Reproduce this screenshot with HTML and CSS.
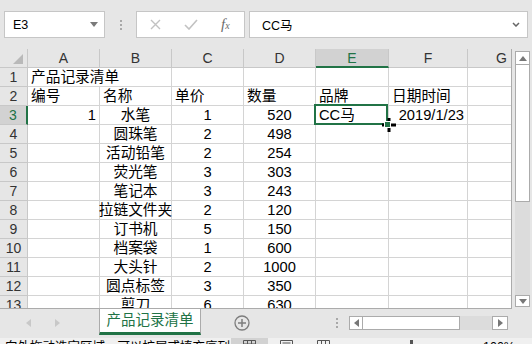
FILE: index.html
```html
<!DOCTYPE html>
<html lang="zh-CN">
  <head>
    <meta charset="UTF-8" />
    <title>产品记录清单 - Excel</title>
    <link rel="stylesheet" href="styles.css">
  </head>
  <body>
    <div class="topbar">
      <div class="namebox">
        <span>E3</span>
        <svg class="caret" width="8" height="5" viewBox="0 0 8 5"><path d="M0 0h8L4 5z" fill="#7a7a7a"/></svg>
      </div>
      <div class="grip"><i></i><i></i><i></i></div>
      <div class="fxbuttons">
        <svg width="11" height="11" viewBox="0 0 11 11"><path d="M1 1l9 9M10 1l-9 9" stroke="#c2c2c2" stroke-width="1.4"/></svg>
        <svg class="ok" width="14" height="11" viewBox="0 0 14 11"><path d="M1 6l4 4 8-9" stroke="#c2c2c2" stroke-width="1.6" fill="none"/></svg>
        <span class="fx">f<sub>x</sub></span>
      </div>
      <div class="formula">
        <span>CC马</span>
        <svg class="chev" width="8" height="5" viewBox="0 0 8 5"><path d="M1 1l3 3 3-3" stroke="#666" stroke-width="1.5" fill="none"/></svg>
      </div>
    </div>

    <div class="workarea">
      <div class="sheet-wrap">
        <div class="sheet">
          <div class="hd corner"><svg width="10" height="10" viewBox="0 0 10 10"><path d="M10 0v10H0z" fill="#b9b9b9"/></svg></div>
          <div class="hd">A</div><div class="hd">B</div><div class="hd">C</div><div class="hd">D</div>
          <div class="hd sel">E</div><div class="hd">F</div><div class="hd last">G</div>

          <div class="rh">1</div><div class="span2">产品记录清单</div><div></div><div></div><div></div><div></div><div></div>
          <div class="rh">2</div><div>编号</div><div>名称</div><div>单价</div><div>数量</div><div>品牌</div><div>日期时间</div><div></div>
          <div class="rh sel">3</div><div class="num">1</div><div class="mid">水笔</div><div class="mid">1</div><div class="mid">520</div><div class="active">CC马</div><div class="num">2019/1/23</div><div></div>
          <div class="rh">4</div><div></div><div class="mid">圆珠笔</div><div class="mid">2</div><div class="mid">498</div><div></div><div></div><div></div>
          <div class="rh">5</div><div></div><div class="mid">活动铅笔</div><div class="mid">2</div><div class="mid">254</div><div></div><div></div><div></div>
          <div class="rh">6</div><div></div><div class="mid">荧光笔</div><div class="mid">3</div><div class="mid">303</div><div></div><div></div><div></div>
          <div class="rh">7</div><div></div><div class="mid">笔记本</div><div class="mid">3</div><div class="mid">243</div><div></div><div></div><div></div>
          <div class="rh">8</div><div></div><div class="mid">拉链文件夹</div><div class="mid">2</div><div class="mid">120</div><div></div><div></div><div></div>
          <div class="rh">9</div><div></div><div class="mid">订书机</div><div class="mid">5</div><div class="mid">150</div><div></div><div></div><div></div>
          <div class="rh">10</div><div></div><div class="mid">档案袋</div><div class="mid">1</div><div class="mid">600</div><div></div><div></div><div></div>
          <div class="rh">11</div><div></div><div class="mid">大头针</div><div class="mid">2</div><div class="mid">1000</div><div></div><div></div><div></div>
          <div class="rh">12</div><div></div><div class="mid">圆点标签</div><div class="mid">3</div><div class="mid">350</div><div></div><div></div><div></div>
          <div class="rh">13</div><div></div><div class="mid">剪刀</div><div class="mid">6</div><div class="mid">630</div><div></div><div></div><div></div>
        </div>
      </div>
      <div class="vscroll">
        <div class="sbtn"><svg width="8" height="5" viewBox="0 0 8 5"><path d="M0 5h8L4 0z" fill="#777"/></svg></div>
        <div class="vthumb"></div>
        <div class="track"></div>
        <div class="sbtn down"><svg width="8" height="5" viewBox="0 0 8 5"><path d="M0 0h8L4 5z" fill="#777"/></svg></div>
      </div>
    </div>

    <div class="tabbar">
      <div class="tabnav">
        <svg width="5" height="8" viewBox="0 0 5 8"><path d="M5 0v8L0 4z" fill="#c8c8c8"/></svg>
        <svg width="5" height="8" viewBox="0 0 5 8"><path d="M0 0v8l5-4z" fill="#c8c8c8"/></svg>
      </div>
      <div class="tab">产品记录清单</div>
      <svg class="addsheet" width="16" height="16" viewBox="0 0 16 16"><circle cx="8" cy="8" r="7" fill="none" stroke="#7d7d7d" stroke-width="1.3"/><path d="M8 4v8M4 8h8" stroke="#7d7d7d" stroke-width="1.5"/></svg>
      <div class="grip small"><i></i><i></i><i></i></div>
      <div class="hscroll">
        <div class="sbtn"><svg width="5" height="8" viewBox="0 0 5 8"><path d="M5 0v8L0 4z" fill="#777"/></svg></div>
        <div class="hthumb"></div>
        <div class="track"></div>
        <div class="sbtn"><svg width="5" height="8" viewBox="0 0 5 8"><path d="M0 0v8l5-4z" fill="#777"/></svg></div>
      </div>
    </div>

    <div class="statusbar">
      <div class="status-text">向外拖动选定区域，可以扩展或填充序列；向内拖动则进行清除</div>
      <div class="view on"><svg width="13" height="10" viewBox="0 0 13 10"><path d="M0.5 0.5h12v9h-12zM4.5 0.5v9M8.5 0.5v9M0.5 4h12" stroke="#555" fill="none"/></svg></div>
      <div class="view"><svg width="13" height="10" viewBox="0 0 13 10"><path d="M0.5 0.5h12v9h-12zM2.5 3h8M2.5 5.5h8" stroke="#555" fill="none"/></svg></div>
      <div class="view"><svg width="13" height="10" viewBox="0 0 13 10"><path d="M0.5 0.5h12v9h-12zM4.5 0.5v9M8.5 0.5v9" stroke="#555" fill="none"/></svg></div>
      <div class="zoom"><i></i></div>
      <div class="pct">100%</div>
    </div>

    <svg class="cursor" width="14" height="14" viewBox="0 0 14 14"><path d="M5.5 0h3v14h-3zM0 5.5h14v3H0z" fill="#000"/></svg>
  </body>
</html>
```
FILE: styles.css
```css
body {
  margin: 0;
  width: 532px;
  height: 344px;
  overflow: hidden;
  position: relative;
  background-color: #e6e6e6;
  font-family: "Liberation Sans", "Noto Sans CJK SC", sans-serif;
  color: #000;
}

/* formula bar */
.topbar {
  display: flex;
  align-items: flex-start;
  height: 49px;
  padding: 11px 4px 0;
  box-sizing: border-box;
}
.namebox,
.fxbuttons,
.formula {
  height: 27px;
  box-sizing: border-box;
  background: #fff;
  border: 1px solid #c6c6c6;
  display: flex;
  align-items: center;
  font-size: 12.5px;
}
.namebox {
  width: 101px;
  padding: 0 6px 0 8px;
  justify-content: space-between;
}
.grip {
  width: 31px;
  height: 27px;
  display: flex;
  flex-direction: column;
  align-items: center;
  justify-content: center;
  gap: 2px;
}
.grip i {
  width: 2px;
  height: 2px;
  background: #a8a8a8;
}
.fxbuttons {
  width: 109px;
  padding-left: 13px;
}
.fxbuttons .ok {
  margin-left: 23px;
}
.fx {
  margin-left: 23px;
  font-family: "Liberation Serif", serif;
  font-style: italic;
  font-size: 15px;
  color: #6b6b6b;
}
.fx sub {
  font-size: 10px;
  vertical-align: 0;
}
.formula {
  flex: 1;
  margin-left: 4px;
  padding: 0 7px 0 12px;
  justify-content: space-between;
}

/* grid */
.workarea {
  display: flex;
  align-items: flex-start;
}
.sheet-wrap {
  width: 511px;
  height: 259px;
  overflow: hidden;
  background: #fff;
  border-right: 1px solid #ababab;
  border-bottom: 1px solid #ababab;
}
.sheet {
  display: grid;
  grid-template-columns: 28px 72px 72px 72px 72px 73px 79px 44px;
  grid-auto-rows: 19px;
  font-size: 14.7px;
}
.sheet > div {
  box-sizing: border-box;
  border-right: 1px solid #d4d4d4;
  border-bottom: 1px solid #d4d4d4;
  padding: 1px 3px 0;
  line-height: 17px;
  white-space: nowrap;
  overflow: hidden;
}
.sheet > .hd,
.sheet > .rh {
  background: #e6e6e6;
  border-color: #c8c8c8;
  color: #333;
  text-align: center;
  padding: 1px 0 0;
  font-size: 14px;
}
.sheet > .hd.last {
  text-align: right;
  padding-right: 4px;
}
.sheet > .corner {
  display: flex;
  align-items: flex-end;
  justify-content: flex-end;
  padding: 0 4px 3px 0;
}
.sheet > .hd.sel {
  background: #d2d2d2;
  color: #217346;
  border-bottom: 2px solid #217346;
}
.sheet > .rh.sel {
  background: #d2d2d2;
  color: #217346;
  border-right: 2px solid #217346;
}
.span2 {
  grid-column: span 2;
}
.num {
  text-align: right;
}
.sheet > .mid {
  display: flex;
  justify-content: center;
  overflow: visible;
}
.sheet > .active {
  position: relative;
  overflow: visible;
}
.active::after {
  content: "";
  position: absolute;
  left: -2px;
  top: -2px;
  right: 0;
  bottom: -1px;
  border: 2px solid #217346;
}
.active::before {
  content: "";
  position: absolute;
  right: -3px;
  bottom: -4px;
  width: 5px;
  height: 5px;
  background: #217346;
  border: 1px solid #fff;
  z-index: 1;
}

/* scrollbars */
.vscroll {
  width: 15px;
  height: 256px;
  margin: 2px 0 0 3px;
  display: flex;
  flex-direction: column;
}
.sbtn {
  box-sizing: border-box;
  background: #fff;
  border: 1px solid #ababab;
  display: flex;
  align-items: center;
  justify-content: center;
}
.vscroll .sbtn {
  height: 14px;
}
.vscroll .down {
  height: 12px;
}
.vthumb {
  height: 137px;
  box-sizing: border-box;
  background: #fff;
  border: 1px solid #ababab;
  border-top: 0;
}
.track {
  flex: 1;
  background: #dcdcdc;
}

/* sheet tabs */
.tabbar {
  display: flex;
  align-items: flex-start;
  height: 29px;
}
.tabnav {
  width: 99px;
  height: 27px;
  display: flex;
  align-items: center;
  gap: 24px;
  padding-left: 26px;
  box-sizing: border-box;
}
.tab {
  width: 102px;
  height: 26px;
  box-sizing: border-box;
  background: #fff;
  border-left: 1px solid #ababab;
  border-right: 1px solid #ababab;
  border-bottom: 3px solid #217346;
  color: #217346;
  font-size: 14.5px;
  line-height: 22px;
  text-align: center;
}
.addsheet {
  margin: 6px 0 0 33px;
}
.grip.small {
  width: 8px;
  height: 27px;
  margin-left: 83px;
}
.hscroll {
  display: flex;
  height: 14px;
  width: 159px;
  margin: 7px 0 0 8px;
}
.hscroll .sbtn {
  width: 14px;
}
.hscroll .sbtn:last-child {
  width: 16px;
}
.hthumb {
  width: 97px;
  box-sizing: border-box;
  background: #fff;
  border: 1px solid #ababab;
  border-left: 0;
}

/* status bar */
.statusbar {
  display: flex;
  align-items: flex-start;
  height: 16px;
  background: #f0f0f0;
  font-size: 12.5px;
}
.status-text {
  width: 226px;
  padding: 1px 0 0 5px;
  line-height: 16px;
  overflow: hidden;
  white-space: nowrap;
}
.view {
  width: 37px;
  height: 16px;
  display: flex;
  justify-content: center;
  padding-top: 2px;
  box-sizing: border-box;
}
.view.on {
  background: #d2d2d2;
}
.zoom {
  width: 100px;
  height: 16px;
  margin-left: 29px;
  position: relative;
}
.zoom i {
  position: absolute;
  left: 39px;
  top: 2px;
  width: 3px;
  height: 8px;
  background: #555;
}
.pct {
  margin-left: 12px;
  padding-top: 1px;
  line-height: 16px;
}

.cursor {
  position: absolute;
  left: 382px;
  top: 118px;
}
```
